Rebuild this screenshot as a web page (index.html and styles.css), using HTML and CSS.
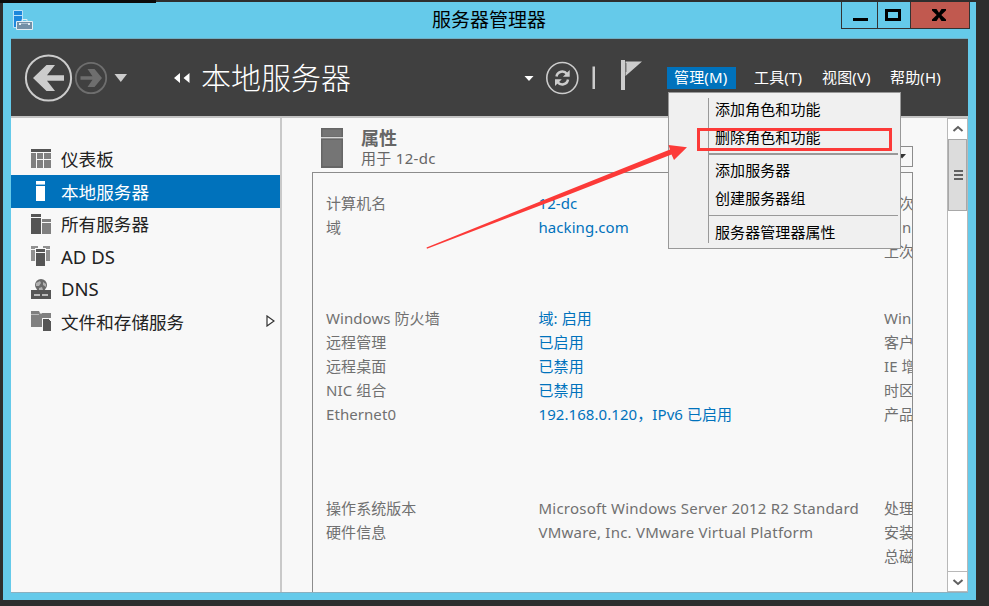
FILE: index.html
```
<!DOCTYPE html>
<html lang="zh-CN">
<head>
<meta charset="utf-8">
<title>服务器管理器</title>
<link rel="stylesheet" href="styles.css">
</head>
<body>
<div class="desktop-edge"></div>
<div class="window">
  <header class="titlebar">
    <svg class="app-icon" width="20" height="20" viewBox="0 0 20 20"><path d="M.5.5h9v17h-9z" fill="#1d87dc" stroke="#b9e2f8"/><path d="M1 5.500h8" stroke="#b9e2f8"/><path d="M9 11V9.500h5V11" fill="none" stroke="#dfeef5"/><path d="M3.500 11.500h16v8h-16z" fill="#7291a8" stroke="#e4eff5"/><path d="M6 13h2v2H6zM15 13h2v2h-2z" fill="#e4eff5"/><path d="M8 13.500h7" stroke="#a9bfce"/></svg>
    <h1 class="window-title">服务器管理器</h1>
    <div class="controls">
      <div class="control"><svg width="36" height="26"><path d="M11 16h15v3H11z"/></svg></div>
      <div class="control control-max"><svg width="32" height="26"><path d="M8.500 8.500h13v9h-13z" fill="none" stroke="#000" stroke-width="3"/></svg></div>
      <div class="control control-close"><svg width="58" height="26"><path d="M21 7h4.500l2.500 3.700L30.500 7H35v1.500L30.300 13l4.700 4.500V19h-4.500L28 15.300 25.500 19H21v-1.500l4.700-4.500L21 8.500z"/></svg></div>
    </div>
  </header>
  <div class="client">
    <nav class="toolbar">
      <svg class="nav-buttons" width="120" height="60" viewBox="0 0 120 60">
        <circle cx="37.500" cy="30" r="22.600" fill="none" stroke="#ccc" stroke-width="2"/>
        <path d="M22 30 35.500 17H44l-8 10.300h17v5.400H36L44 43h-8.500z" fill="#ccc"/>
        <circle cx="80" cy="30" r="15.200" fill="none" stroke="#6e6e6e" stroke-width="1.800"/>
        <path d="M91 30 83.500 21H76.500l5 7.200H69.500v3.600h12l-5 7.200h7z" fill="#6e6e6e"/>
        <path d="M103.500 26H116l-6.200 8z" fill="#ccc"/>
      </svg>
      <svg class="crumb-arrows" width="18" height="12" viewBox="0 0 18 12"><path d="M7 1v10L1 6zM16.500 1v10l-6-5z" fill="#fff"/></svg>
      <span class="crumb">本地服务器</span>
      <svg class="actions" width="122" height="44" viewBox="0 0 122 44">
        <path d="M3.500 20h9L8 25z" fill="#fff"/>
        <circle cx="41.300" cy="22" r="15.500" fill="none" stroke="#ccc" stroke-width="1.600"/>
        <path d="M35.500 20.500c1-5.500 7.500-6.500 10.500-2.500M47 23.500c-1 5.500-7.500 6.500-10.500 2.500" fill="none" stroke="#ccc" stroke-width="2.500"/>
        <path d="M48.700 14v6.800h-6.800zM34 30v-6.800h6.800z" fill="#ccc"/>
        <path d="M71.500 10.500H74V33h-2.500zM100 4h4v30h-4zM104.500 5.500H121L104.500 20z" fill="#ccc"/><path d="M105 7v9" stroke="#555" stroke-width=".8"/>
      </svg>
      <div class="menubar">
        <span class="menu-title active">管理(M)</span>
        <span class="menu-title">工具(T)</span>
        <span class="menu-title">视图(V)</span>
        <span class="menu-title">帮助(H)</span>
      </div>
    </nav>
    <div class="body">
      <aside class="sidebar">
        <div class="side-item"><svg class="side-icon" viewBox="0 0 20 20"><path fill="#555" d="M0 0h20v3H0z"/><path fill="#808080" d="M0 4h5v15H0zM6 4h6v6H6zM13 4h7v6h-7zM6 11h6v8H6zM13 11h7v8h-7z"/></svg>仪表板</div>
        <div class="side-item selected"><svg class="side-icon" viewBox="0 0 20 20"><path fill="#fff" d="M5 0h9v3H5zM5 5h9v15H5z"/><path fill="#91c4e8" d="M5 3h9v1H5z"/></svg>本地服务器</div>
        <div class="side-item"><svg class="side-icon" viewBox="0 0 20 20"><path fill="#555" d="M0 0h10v3H0zM0 4h10v16H0z"/><path fill="#808080" d="M11 5h9v3h-9zM11 9h9v11h-9z"/></svg>所有服务器</div>
        <div class="side-item latin"><svg class="side-icon" viewBox="0 0 20 20"><path fill="#909090" d="M0 0h7v2H4v13H0zM12 0h7v15h-4V2h-3z"/><path fill="#555" d="M5 3h9v3H5zM5 7h9v13H5z"/><path stroke="#f8f8f8" d="M0 3.500h4M15 3.500h4"/></svg>AD DS</div>
        <div class="side-item latin"><svg class="side-icon" viewBox="0 0 20 20"><circle cx="10" cy="6" r="6" fill="#696969"/><path fill="#b0b0b0" d="m5 4 4-2 1 2-2 3H5zM12 3l3 2v3l-3-2zM8 9l3-1 1 3H8z"/><path fill="#555" d="M0 11h20v9H0z"/><path stroke="#bbb" stroke-width="2" d="M3 16h6M11 16h6"/></svg>DNS</div>
        <div class="side-item"><svg class="side-icon" viewBox="0 0 20 20"><path fill="#808080" d="M0 0h8l1 2h11v5h-9v9H0z"/><path stroke="#bbb" d="M0 3.500h8l1-1h2"/><path fill="#555" stroke="#f8f8f8" d="M11.500 7.500h6l3 3v10h-9z"/></svg>文件和存储服务<svg class="expander" width="9" height="12" viewBox="0 0 9 12"><path d="m1 1 7 5-7 5z" fill="#fff" stroke="#333" stroke-width="1.200"/></svg></div>
      </aside>
      <main class="main">
        <div class="panel-head">
          <svg width="22" height="40" viewBox="0 0 22 40"><path fill="#666" d="M0 0h22v40H0z"/><path fill="#757575" d="M1.500 1.500h19v7h-19zM1.500 12h19v26h-19z"/><path stroke="#ddd" stroke-width="1.300" d="M0 9.700h22"/></svg>
          <div class="panel-titles"><h2>属性</h2><p>用于 12-dc</p></div>
          <div class="tasks"><svg width="8" height="5"><path d="M0 0h8L4 4.500z" fill="#333"/></svg></div>
        </div>
        <div class="properties">
          <div class="group g1">
            <span>计算机名</span><a>12-dc</a><span>上次</span>
            <span>域</span><a>hacking.com</a><span>Win</span>
            <span></span><span></span><span>上次</span>
          </div>
          <div class="group g2">
            <span>Windows 防火墙</span><a>域: 启用</a><span>Win</span>
            <span>远程管理</span><a>已启用</a><span>客户</span>
            <span>远程桌面</span><a>已禁用</a><span>IE 增</span>
            <span>NIC 组合</span><a>已禁用</a><span>时区</span>
            <span>Ethernet0</span><a>192.168.0.120，IPv6 已启用</a><span>产品</span>
          </div>
          <div class="group g3">
            <span>操作系统版本</span><span class="wide">Microsoft Windows Server 2012 R2 Standard</span><span>处理</span>
            <span>硬件信息</span><span class="wide">VMware, Inc. VMware Virtual Platform</span><span>安装</span>
            <span></span><span></span><span>总磁</span>
          </div>
        </div>
      </main>
      <div class="scrollbar">
        <div class="scroll-btn"><svg width="12" height="8"><path d="m1.500 6 4.500-4 4.500 4" fill="none" stroke="#606060" stroke-width="2"/></svg></div>
        <div class="thumb"></div>
        <div class="scroll-btn down"><svg width="12" height="8"><path d="m1.500 2 4.500 4 4.500-4" fill="none" stroke="#606060" stroke-width="2"/></svg></div>
      </div>
    </div>
  </div>
</div>
<div class="dropdown">
  <div class="dropdown-list">
    <div class="option">添加角色和功能</div>
    <div class="option">删除角色和功能</div>
    <hr class="thick">
    <div class="option">添加服务器</div>
    <div class="option">创建服务器组</div>
    <hr>
    <div class="option">服务器管理器属性</div>
  </div>
</div>
<svg class="annotation" width="989" height="606"><path d="M698.500 129.500h192v20h-192z" fill="none" stroke="#fc3a38" stroke-width="3"/><path d="M426.500 247.500 560 193.500 670 149.500 668.500 145 687 147.200 674 160 671.500 154.500 560 198 427 248.800z" fill="#fc3a38"/></svg>
</body>
</html>
```
FILE: styles.css
```
* { box-sizing: border-box; }
body {
  margin: 0;
  width: 989px;
  height: 606px;
  padding: 2px 13px 6px 3px;
  overflow: hidden;
  position: relative;
  background: #2e2e2e;
  font-family: "Noto Sans", "Noto Sans CJK SC", sans-serif;
  font-size: 15px;
}
svg { display: block; flex: none; }
h1, h2, p { margin: 0; font-weight: 400; }
.desktop-edge { position: absolute; left: 0; top: 0; width: 156px; height: 3px; background: #0b0b0b; z-index: 1; }
.window { width: 973px; height: 598px; background: #65caea; padding: 0 8px 8px; }
.titlebar { height: 37px; display: flex; position: relative; border-bottom: 1px solid #71aec4; }
.app-icon { margin: 8px 0 0 2px; }
.window-title { flex: 1; margin-left: 399px; font-size: 19px; line-height: 37px; color: #000; }
.controls { display: flex; height: 27px; margin-right: -2px; border: 1px solid #333; border-top: 0; }
.control { width: 36px; border-right: 1px solid #333; }
.control-max { width: 33px; }
.control-close { width: 58px; background: #c1594f; border-right: 0; }
.client { height: 554px; background: #f8f8f8; border-bottom: 1px solid #8ab0c0; }
.toolbar { height: 79px; background: #404040; border-bottom: 2px solid #c4c4c4; display: flex; align-items: flex-start; }
.nav-buttons { margin-top: 9px; }
.crumb-arrows { margin: 33px 0 0 42px; }
.crumb { font-size: 30px; font-weight: 300; line-height: 78px; color: #fff; margin-left: 10px; width: 160px; white-space: nowrap; }
.actions { margin: 17px 0 0 160px; }
.menubar { display: flex; margin: 28px 0 0 24px; }
.menu-title { flex: none; line-height: 21px; height: 22px; color: #fff; padding-left: 7px; width: 68px; white-space: nowrap; letter-spacing: .15px; }
.menu-title.active { background: #0072bc; width: 69px; margin-right: 11px; }
.body { display: flex; height: 474px; }
.sidebar { width: 271px; border-right: 2px solid #c9c9c9; padding-top: 24.500px; }
.side-item { height: 32.500px; display: flex; align-items: center; padding-left: 20px; font-size: 17.600px; color: #222; }
.side-item.latin { font-size: 18.500px; }
.side-icon { width: 20px; height: 20px; margin-right: 10px; }
.selected { background: #0072bc; color: #fff; }
.expander { margin-left: auto; margin-right: 5px; }
.main { width: 631px; padding: 10px 0 0 30px; }
.panel-head { display: flex; height: 44px; padding-left: 9px; color: #666; }
.panel-titles { margin-left: 18px; line-height: 19px; }
.panel-titles p { letter-spacing: .3px; }
.panel-titles h2 { font-size: 18px; font-weight: 700; line-height: 21px; }
.tasks { width: 60px; height: 21px; margin: 18px 0 0 auto; border: 1px solid #8c8c8c; padding: 7px 0 0 44px; }
.properties { height: 420px; border: 1px solid #8c8c8c; border-bottom: 0; padding: 18px 0 0 13px; overflow: hidden; }
.group { display: grid; grid-template-columns: 212.500px 345.500px 28px; grid-auto-rows: 24px; line-height: 24px; color: #707070; white-space: nowrap; letter-spacing: .07px; }
.group a { color: #0072bc; }
.group .wide { letter-spacing: .22px; }
.g1 { margin-bottom: 43px; }
.g2 { margin-bottom: 70px; }
.scrollbar { margin-left: auto; width: 21px; background: #fff; border: 1px solid #b8b8b8; display: flex; flex-direction: column; }
.scroll-btn { height: 20px; display: flex; align-items: center; justify-content: center; }
.scroll-btn.down { margin-top: auto; border-top: 1px solid #b8b8b8; }
.thumb { height: 72px; border: 1px solid #a8a8a8; background: linear-gradient(#606060 0 2px, #dcdcdc 2px 4px, #606060 4px 6px, #dcdcdc 6px 8px, #606060 8px 10px) 5px 30px / 9px 10px no-repeat #dcdcdc; }
.dropdown { position: absolute; left: 668px; top: 92px; width: 233px; height: 157px; background: #f0f0f0; border: 1px solid #999; padding: 5px 2px 5px 39px; z-index: 2; }
.dropdown-list { height: 145px; border-left: 1px solid #999; padding-top: 1px; }
.option { height: 28px; line-height: 20px; padding-left: 6px; color: #000; letter-spacing: .08px; }
.dropdown hr { border: 0; height: 1px; background: #999; margin: -1px 0 6px; }
.dropdown hr.thick { height: 2px; margin: -2px 0 5px; }
.annotation { position: absolute; left: 0; top: 0; z-index: 3; }
```
